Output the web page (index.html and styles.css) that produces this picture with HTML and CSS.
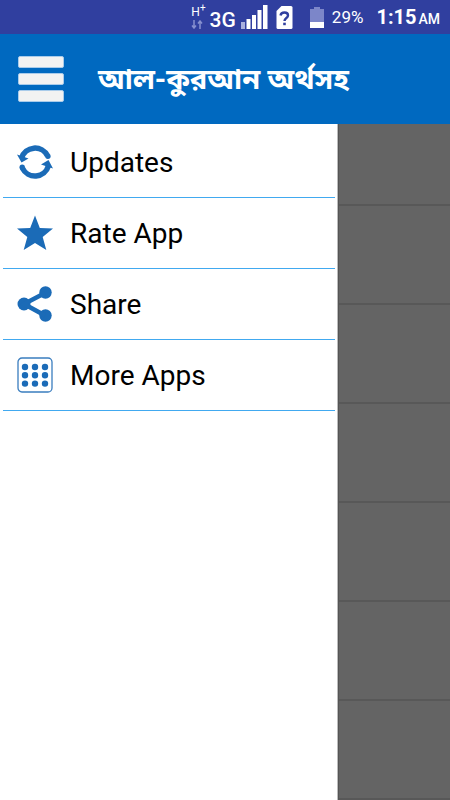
FILE: index.html
```html
<!DOCTYPE html>
<html lang="bn">
<head>
<meta charset="utf-8">
<meta name="viewport" content="width=device-width, initial-scale=1">
<title>আল-কুরআন অর্থসহ</title>
<link rel="stylesheet" href="styles.css">
</head>
<body>
<div class="status" lang="en">
  <div class="network">
    <span class="hspa">H<sup>+</sup></span>
    <svg width="12" height="9" viewBox="0 0 12 9" aria-hidden="true"><path d="M3 0v8M1 5.500l2 2.500 2-2.500M9 9V1M7 3.500l2-2.500 2 2.500" fill="none" stroke="#8790cf" stroke-width="1.500"/></svg>
  </div>
  <span class="generation">3G</span>
  <svg class="signal" width="27" height="24" viewBox="0 0 27 24" aria-hidden="true"><path fill="#a9b0dd" d="M0 17h4v7H0z"/><path fill="#fff" d="M5.500 14h4v10h-4zM11 10h4v14h-4zM16.500 5h4v19h-4zM22 0h4.500v24H22z"/></svg>
  <svg class="sim" width="17" height="23" viewBox="0 0 17 23" aria-hidden="true"><path fill="#fff" d="M5.500 0H15q1.500 0 1.500 1.500v20q0 1.500-1.500 1.500H2q-1.500 0-1.500-1.500V5z"/><path d="M4.500 9.500Q5 6.500 8.500 6.500T12 9.500C12 12 8.500 12 8.500 15" fill="none" stroke="#303f9f" stroke-width="2.400"/><path fill="#303f9f" d="M7.200 16.700h2.600v2.500H7.200z"/></svg>
  <svg class="battery" width="14" height="21" viewBox="0 0 14 21" aria-hidden="true"><path fill="#7c86c9" d="M4 0h6v2h4v13H0V2h4z"/><path fill="#fff" d="M0 15h14v6H0z"/></svg>
  <span class="percent">29%</span>
  <span class="time">1:15<small>AM</small></span>
</div>
<header class="header">
  <button class="toggle" type="button" aria-label="Menu"><svg width="46" height="46" viewBox="0 0 46 46"><g fill="#f2f2f2" stroke="#a9cbea" stroke-width="1"><rect x=".5" y=".5" width="45" height="11" rx="1.500"/><rect x=".5" y="17.500" width="45" height="11" rx="1.500"/><rect x=".5" y="34.500" width="45" height="11" rx="1.500"/></g></svg></button>
  <h1 class="title">আল-কুরআন অর্থসহ</h1>
</header>
<main class="content">
  <nav class="drawer" lang="en">
    <a class="item" href="#updates"><svg width="36" height="36" viewBox="0 0 36 36"><g fill="none" stroke="#1b6bb7" stroke-width="5.500"><path d="M4.600 14A14 14 0 0 1 30.500 11.800"/><path d="M31.400 22A14 14 0 0 1 5.400 24.100"/></g><path fill="#1b6bb7" d="M0 10.500l11.500 4-7 4zM36 24.500l-12-4 7.500-4.500z"/><circle cx="30.900" cy="12.300" r="2.700" fill="#1b6bb7"/><circle cx="5.200" cy="23.200" r="2.700" fill="#1b6bb7"/></svg>Updates</a>
    <a class="item" href="#rate"><svg width="36" height="36" viewBox="0 0 36 36"><path fill="#1b6bb7" d="M18 .5l4.800 12.500L36 13.500 25.700 21.900 29.300 35 18 28 6.700 35l3.600-13.100L0 13.500l13.200-.5z"/></svg>Rate App</a>
    <a class="item" href="#share"><svg width="36" height="36" viewBox="0 0 36 36"><g fill="#1b6bb7"><circle cx="7" cy="18" r="6.500"/><circle cx="28.500" cy="6.500" r="6.200"/><circle cx="28.500" cy="29.500" r="6.200"/></g><path d="M28 7L7 18l21 11.500" fill="none" stroke="#1b6bb7" stroke-width="4.500"/></svg>Share</a>
    <a class="item" href="#more"><svg width="36" height="36" viewBox="0 0 36 36"><rect x="1" y="1" width="34" height="34" rx="4" fill="none" stroke="#3a7dbf" stroke-width="1.300"/><path d="M8 10h0M18 10h0M28 10h0M8 18.300h0M18 18.300h0M28 18.300h0M8 26.600h0M18 26.600h0M28 26.600h0" stroke="#1b6bb7" stroke-width="6.400" stroke-linecap="round"/></svg>More Apps</a>
  </nav>
  <div class="list">
    <div class="row first"></div>
    <div class="row"></div>
    <div class="row"></div>
    <div class="row"></div>
    <div class="row"></div>
    <div class="row"></div>
    <div class="row"></div>
  </div>
</main>
</body>
</html>
```
FILE: styles.css
```css
* {
  box-sizing: border-box;
}

body {
  margin: 0;
  min-height: 100vh;
  display: flex;
  flex-direction: column;
  font-family: Roboto, "Noto Sans", "Noto Sans Bengali", sans-serif;
  background: #646464;
}

svg {
  display: block;
  flex: none;
}

.status {
  display: flex;
  align-items: center;
  justify-content: flex-end;
  height: 34px;
  padding-right: 10px;
  background: #303f9f;
  color: #fff;
  white-space: nowrap;
}

.network {
  display: flex;
  flex-direction: column;
  gap: 2px;
  margin-right: 4px;
}

.hspa {
  font-size: 12px;
  line-height: 12px;
}

.hspa sup {
  font-size: 10px;
  line-height: 0;
}

.generation {
  margin: 6px 5px 0 0;
  font-size: 21px;
  font-weight: 500;
  line-height: 24px;
}

.signal {
  margin-right: 8px;
}

.sim {
  margin-right: 17px;
}

.battery {
  margin-right: 8px;
}

.percent {
  margin-right: 13px;
  font-size: 17px;
}

.time {
  font-size: 20px;
  font-weight: 700;
}

.time small {
  margin-left: 2px;
  font-size: 14px;
  font-weight: 500;
}

.header {
  display: flex;
  align-items: center;
  gap: 34px;
  height: 90px;
  padding: 0 18px;
  background: #0069c0;
  color: #fff;
}

.toggle {
  padding: 0;
  border: 0;
  background: none;
}

.title {
  margin: 0;
  font-size: 29px;
  font-weight: 700;
  line-height: 40px;
}

.content {
  flex: 1;
  display: flex;
}

.drawer {
  width: 75%;
  padding: 3px 2px 3px 3px;
  background: #fff;
  border-right: 1px solid #bcbcbc;
}

.item {
  display: flex;
  align-items: center;
  gap: 17px;
  height: 71px;
  padding-left: 14px;
  border-bottom: 1px solid #41a9f0;
  color: #000;
  font-size: 28px;
  text-decoration: none;
}

.list {
  flex: 1;
  display: flex;
  flex-direction: column;
  border-left: 1px solid #555;
}

.row {
  flex: 1 0 96px;
  border-bottom: 2px solid #585858;
}

.first {
  flex: none;
  height: 82px;
}
```
